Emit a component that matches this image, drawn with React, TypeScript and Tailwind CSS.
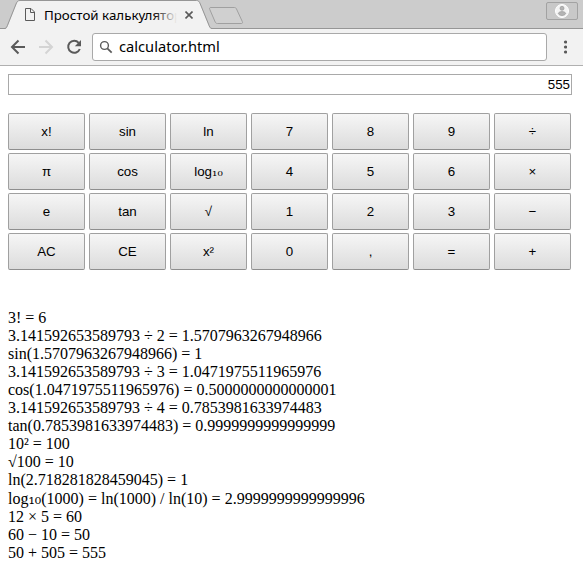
const rows: string[][] = [
  ['x!', 'sin', 'ln', '7', '8', '9', '÷'],
  ['π', 'cos', 'log₁₀', '4', '5', '6', '×'],
  ['e', 'tan', '√', '1', '2', '3', '−'],
  ['AC', 'CE', 'x²', '0', ',', '=', '+'],
];

const history: string[] = [
  '3! = 6',
  '3.141592653589793 ÷ 2 = 1.5707963267948966',
  'sin(1.5707963267948966) = 1',
  '3.141592653589793 ÷ 3 = 1.0471975511965976',
  'cos(1.0471975511965976) = 0.5000000000000001',
  '3.141592653589793 ÷ 4 = 0.7853981633974483',
  'tan(0.7853981633974483) = 0.9999999999999999',
  '10² = 100',
  '√100 = 10',
  'ln(2.718281828459045) = 1',
  'log₁₀(1000) = ln(1000) / ln(10) = 2.9999999999999996',
  '12 × 5 = 60',
  '60 − 10 = 50',
  '50 + 505 = 555',
];

/** Sets the logarithm's subscript base in a serif face. */
function Expression({ text }: { text: string }) {
  const [before, after] = text.split('₁₀');
  if (after === undefined) return <span>{text}</span>;
  return (
    <span className="whitespace-pre">
      {before}
      <span className="font-['DejaVu_Serif',serif] leading-none">₁₀</span>
      {after}
    </span>
  );
}

function TabStrip() {
  return (
    <div className="relative flex h-[29px] items-start bg-[#cccccc]">
      <svg className="absolute inset-0" width="583" height="29" viewBox="0 0 583 29">
        <path d="M0 28.5H583" stroke="#969696" />
        <path d="M5 29C7 28 7.500 26.500 8.500 24L16.500 4C17.500 1.500 18 .5 20 .5H196.500C198.500 .5 199 1.500 200 4L208 24C209 26.500 209.500 28 212 29Z" fill="#f2f2f2" />
        <path d="M0 28.500H4.500C6.500 28.500 7 26.500 8 24L16 4C17 1.500 18 .5 20 .5H196.500C198.500 .5 199.300 1.500 200.300 4L208.500 24C209.500 26.500 210 28.500 212 28.500" fill="none" stroke="#969696" />
        <path d="M211 7.500H234.500C235.500 7.500 236 8 236.500 9L242.300 21.500C242.800 22.800 242.500 23.500 241.500 23.500H217.500C216.300 23.500 215.700 23 215.200 22L209.800 9.500C209.200 8.200 209.500 7.500 211 7.500Z" fill="#d0d0d0" stroke="#a0a0a0" />
      </svg>
      <div className="relative ml-6 flex h-[29px] w-[172px] items-center">
        <svg width="12" height="15" viewBox="0 0 12 15" className="shrink-0" fill="none" stroke="#5a5a5a">
          <path d="M1.500 1.500H7L10.500 5V13.500H1.500ZM6.500 1.500V5.500H10.500" />
        </svg>
        <div className="relative ml-2 w-[133px] overflow-hidden whitespace-nowrap font-['Noto_Sans',sans-serif] text-[13.333px] leading-[18px] text-black">
          Простой калькулятор
          <div className="absolute inset-y-0 right-0 w-6 bg-linear-to-r from-[#f2f2f200] to-[#f2f2f2]" />
        </div>
        <svg width="8" height="8" viewBox="0 0 8 8" className="ml-2 shrink-0" stroke="#5a5a5a" strokeWidth="1.600">
          <path d="M.5 .5L7.500 7.500M7.500 .5L.5 7.500" />
        </svg>
      </div>
      <div className="relative mt-0.5 ml-auto mr-[5px] flex h-[18px] w-8 items-center justify-center rounded-[2px] border border-[#a2a2a2] bg-[#c8c8c8]">
        <svg width="14" height="14" viewBox="0 0 14 14">
          <circle cx="7" cy="7" r="6.500" fill="#f4f4f4" stroke="#fff" />
          <circle cx="7" cy="4.300" r="2" fill="#b4b4b4" stroke="#999" strokeWidth=".7" />
          <path d="M3.300 9.800C3.300 8.300 5.300 7.600 7 7.600S10.700 8.300 10.700 9.800C9.900 10.900 8.500 11.500 7 11.500S4.100 10.900 3.300 9.800Z" fill="#b4b4b4" stroke="#999" strokeWidth=".7" />
        </svg>
      </div>
    </div>
  );
}

function Toolbar() {
  return (
    <div className="flex h-[37px] items-center border-b border-[#b0b0b0] bg-[#f2f2f2]">
      <svg width="92" height="36" viewBox="0 0 92 36" fill="none" strokeWidth="2">
        <path d="M25 18H12.500M18.500 11.500L12 18L18.500 24.500" stroke="#5a5a5a" />
        <path d="M39 18H51.500M45.500 11.500L52 18L45.500 24.500" stroke="#d4d4d4" />
        <path d="M78.700 13.800A6 6 0 1 0 79.800 20" stroke="#5a5a5a" />
        <path d="M81 11V17.200H74.800Z" fill="#5a5a5a" />
      </svg>
      <div className="flex h-7 w-[455px] items-center rounded-[3px] border border-[#a9a9a9] bg-white">
        <svg width="14" height="14" viewBox="0 0 14 14" className="ml-1.5" fill="none" stroke="#5a5a5a">
          <circle cx="5.500" cy="5.500" r="3.900" strokeWidth="1.400" />
          <path d="M8.300 8.300L12.700 12.700" strokeWidth="1.700" />
        </svg>
        <span className="relative -top-px ml-[6px] font-['Noto_Sans',sans-serif] text-[14.667px] leading-5 text-black">calculator.html</span>
      </div>
      <svg width="4" height="14" viewBox="0 0 4 14" className="ml-4" fill="#5a5a5a">
        <circle cx="2.500" cy="2" r="1.600" />
        <circle cx="2.500" cy="7" r="1.600" />
        <circle cx="2.500" cy="12" r="1.600" />
      </svg>
    </div>
  );
}

export default function App() {
  return (
    <div className="h-[579px] w-[583px] overflow-hidden bg-white text-black">
      <TabStrip />
      <Toolbar />
      <main className="px-2 pt-2">
        <input
          readOnly
          value="555"
          className="block h-[21px] w-[564px] border border-[#a9a9a9] bg-white px-px text-right font-['Liberation_Sans',sans-serif] text-[13.333px] outline-none"
        />
        <div className="mt-[18px] grid w-[563px] grid-cols-7 gap-x-1 gap-y-[3px] font-['Liberation_Sans',sans-serif] text-[13.333px]">
          {rows.flat().map((label) => (
            <button
              key={label}
              className="flex h-[37px] items-center justify-center rounded-[2px] border border-[#a0a0a0] border-b-[#8e8e8e] bg-linear-to-b from-[#f6f6f6] to-[#dcdcdc] leading-[15px]"
            >
              <Expression text={label} />
            </button>
          ))}
        </div>
        <div className="mt-[39px] font-['Liberation_Serif',serif] text-[16px] leading-[18px]">
          {history.map((line) => (
            <div key={line} className={line.startsWith('log') ? 'h-[19px] pt-px' : 'h-[18px]'}>
              <Expression text={line} />
            </div>
          ))}
        </div>
      </main>
    </div>
  );
}
